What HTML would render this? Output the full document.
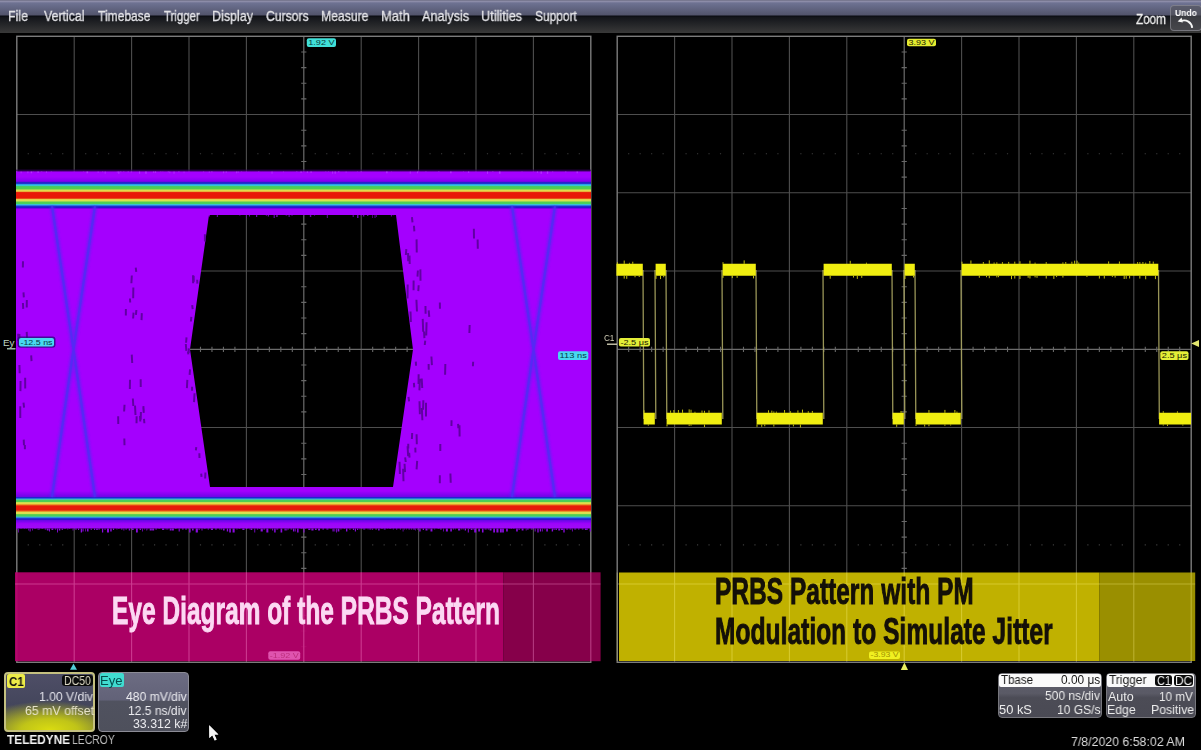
<!DOCTYPE html>
<html><head><meta charset="utf-8">
<style>
html,body{margin:0;padding:0;background:#000;}
body{width:1201px;height:750px;position:relative;overflow:hidden;font-family:"Liberation Sans",sans-serif;}
#menu{position:absolute;left:0;top:0;width:1201px;height:33px;
background:linear-gradient(to bottom,#6e6e84 0px,#8c8ca8 1.5px,#6e7292 3px,#52546c 15px,#0a0c12 16px,#14161b 17.5px,#383838 32.5px);}
#undo{position:absolute;left:1169.8px;top:4.6px;width:32px;height:26.8px;box-sizing:border-box;border:1.6px solid rgba(150,150,158,0.6);border-radius:4px;background:rgba(84,84,90,0.62);}
.box{position:absolute;box-sizing:border-box;border-radius:4px;}
#c1box{left:4px;top:672px;width:91px;height:59.5px;border:2px solid #c4c080;
background:radial-gradient(ellipse 85% 52% at 50% 100%,#dadc10 0%,#c0c418 38%,rgba(110,112,80,0.0) 100%),linear-gradient(to bottom,#4e4e66 0%,#44465c 55%,#5a5c48 100%);}
#eyebox{left:98.2px;top:672px;width:90.4px;height:59.5px;border:1.5px solid #8c8c96;
background:linear-gradient(to bottom,#6c6c82 0%,#626278 46%,#50525f 49%,#4e505c 100%);}
#tbox{left:998px;top:672.5px;width:103.5px;height:45px;border:1.5px solid #76767c;
background:linear-gradient(to bottom,#5c5c68 0%,#5a5a66 45%,#4c4c56 55%,#4a4a54 100%);}
#trbox{left:1105.6px;top:672.5px;width:90px;height:45px;border:1.5px solid #76767c;
background:linear-gradient(to bottom,#5c5c68 0%,#5a5a66 45%,#4c4c56 55%,#4a4a54 100%);}
.hdr{position:absolute;background:#fafafa;border-radius:2px;}
.blk{position:absolute;background:#0a0a0a;border-radius:3px;}
.tg{position:absolute;border-radius:2px;}
.t{position:absolute;white-space:pre;transform-origin:0 0;will-change:transform;}
</style></head><body>
<svg width="1201" height="750" style="position:absolute;left:0;top:0" font-family="Liberation Sans">
<style>
.g{stroke:#4e4e4e;stroke-width:1.1;fill:none}
.gc{stroke:#6c6c6c;stroke-width:1.2;fill:none}
.gt{stroke:#686868;stroke-width:1.1}
.gd{stroke:#3c3c3c;stroke-width:1.1}
.gb{stroke:#7c7c7c;stroke-width:1.4;fill:none}
</style>

<defs>
<filter id="bl1" x="-20%" y="-5%" width="140%" height="110%"><feGaussianBlur stdDeviation="1.2"/></filter>
<linearGradient id="pv" x1="0" y1="171" x2="0" y2="527" gradientUnits="userSpaceOnUse">
<stop offset="0" stop-color="#a400fe"/>
<stop offset="0.025" stop-color="#a400fe"/>
<stop offset="0.028" stop-color="#a400fe"/>
<stop offset="0.9" stop-color="#a400fe"/>
<stop offset="0.955" stop-color="#8204f2"/>
<stop offset="1" stop-color="#a008f8"/>
</linearGradient>
<linearGradient id="bt" x1="0" y1="177" x2="0" y2="209.5" gradientUnits="userSpaceOnUse">
<stop offset="0.0000" stop-color="#a400fe"/>
<stop offset="0.1323" stop-color="#8400f0"/>
<stop offset="0.1631" stop-color="#2a20c8"/>
<stop offset="0.2092" stop-color="#1e3ad0"/>
<stop offset="0.2338" stop-color="#2ab0e8"/>
<stop offset="0.2646" stop-color="#38c8d0"/>
<stop offset="0.2954" stop-color="#48cc58"/>
<stop offset="0.3692" stop-color="#50d050"/>
<stop offset="0.4000" stop-color="#dce050"/>
<stop offset="0.4400" stop-color="#e8d048"/>
<stop offset="0.4615" stop-color="#e86018"/>
<stop offset="0.4800" stop-color="#e81808"/>
<stop offset="0.6462" stop-color="#e81808"/>
<stop offset="0.6708" stop-color="#e87020"/>
<stop offset="0.6954" stop-color="#e0e050"/>
<stop offset="0.7385" stop-color="#d8e050"/>
<stop offset="0.7692" stop-color="#50d050"/>
<stop offset="0.8246" stop-color="#48d060"/>
<stop offset="0.8492" stop-color="#38c0e0"/>
<stop offset="0.8800" stop-color="#2a70e0"/>
<stop offset="0.8985" stop-color="#1e30d0"/>
<stop offset="0.9477" stop-color="#2a10d0"/>
<stop offset="0.9723" stop-color="#8000f0"/>
<stop offset="1.0000" stop-color="#a400fe"/>
</linearGradient>
<linearGradient id="bb" x1="0" y1="491" x2="0" y2="524" gradientUnits="userSpaceOnUse">
<stop offset="0.0000" stop-color="#a400fe"/>
<stop offset="0.1667" stop-color="#7006e8"/>
<stop offset="0.1909" stop-color="#2020c8"/>
<stop offset="0.2182" stop-color="#2040d8"/>
<stop offset="0.2424" stop-color="#38c0e0"/>
<stop offset="0.2788" stop-color="#48cc60"/>
<stop offset="0.3273" stop-color="#50d050"/>
<stop offset="0.3515" stop-color="#d8e050"/>
<stop offset="0.3879" stop-color="#e8d848"/>
<stop offset="0.4182" stop-color="#ea8020"/>
<stop offset="0.4545" stop-color="#e81a0a"/>
<stop offset="0.5758" stop-color="#e81a0a"/>
<stop offset="0.6121" stop-color="#ea8020"/>
<stop offset="0.6485" stop-color="#e0e050"/>
<stop offset="0.6909" stop-color="#d8e050"/>
<stop offset="0.7152" stop-color="#50d050"/>
<stop offset="0.7636" stop-color="#48cc60"/>
<stop offset="0.7879" stop-color="#38c0e0"/>
<stop offset="0.8242" stop-color="#2040d8"/>
<stop offset="0.8606" stop-color="#2020c8"/>
<stop offset="0.8939" stop-color="#6a08e8"/>
<stop offset="1.0000" stop-color="#a400fe"/>
</linearGradient>
</defs>
<path d="M74.2 36.3V662.3M131.6 36.3V662.3M189 36.3V662.3M246.4 36.3V662.3M361.2 36.3V662.3M418.6 36.3V662.3M476 36.3V662.3M533.4 36.3V662.3M16.8 114.55H590.8M16.8 192.8H590.8M16.8 271.05H590.8M16.8 427.55H590.8M16.8 505.8H590.8M16.8 584.05H590.8" class="g"/>
<path d="M303.8 36.3V662.3M16.8 349.3H590.8" class="gc"/>
<path d="M301.2 51.95h5.2M301.2 67.6h5.2M301.2 83.25h5.2M301.2 98.9h5.2M301.2 130.2h5.2M301.2 145.85h5.2M301.2 161.5h5.2M301.2 177.15h5.2M301.2 208.45h5.2M301.2 224.1h5.2M301.2 239.75h5.2M301.2 255.4h5.2M301.2 286.7h5.2M301.2 302.35h5.2M301.2 318h5.2M301.2 333.65h5.2M301.2 364.95h5.2M301.2 380.6h5.2M301.2 396.25h5.2M301.2 411.9h5.2M301.2 443.2h5.2M301.2 458.85h5.2M301.2 474.5h5.2M301.2 490.15h5.2M301.2 521.45h5.2M301.2 537.1h5.2M301.2 552.75h5.2M301.2 568.4h5.2M301.2 599.7h5.2M301.2 615.35h5.2M301.2 631h5.2M301.2 646.65h5.2M28.28 346.7v5.2M39.76 346.7v5.2M51.24 346.7v5.2M62.72 346.7v5.2M85.68 346.7v5.2M97.16 346.7v5.2M108.64 346.7v5.2M120.12 346.7v5.2M143.08 346.7v5.2M154.56 346.7v5.2M166.04 346.7v5.2M177.52 346.7v5.2M200.48 346.7v5.2M211.96 346.7v5.2M223.44 346.7v5.2M234.92 346.7v5.2M257.88 346.7v5.2M269.36 346.7v5.2M280.84 346.7v5.2M292.32 346.7v5.2M315.28 346.7v5.2M326.76 346.7v5.2M338.24 346.7v5.2M349.72 346.7v5.2M372.68 346.7v5.2M384.16 346.7v5.2M395.64 346.7v5.2M407.12 346.7v5.2M430.08 346.7v5.2M441.56 346.7v5.2M453.04 346.7v5.2M464.52 346.7v5.2M487.48 346.7v5.2M498.96 346.7v5.2M510.44 346.7v5.2M521.92 346.7v5.2M544.88 346.7v5.2M556.36 346.7v5.2M567.84 346.7v5.2M579.32 346.7v5.2" class="gt"/>
<path d="M27.68 153.68h1.2M39.16 153.68h1.2M50.64 153.68h1.2M62.12 153.68h1.2M85.08 153.68h1.2M96.56 153.68h1.2M108.04 153.68h1.2M119.52 153.68h1.2M142.48 153.68h1.2M153.96 153.68h1.2M165.44 153.68h1.2M176.92 153.68h1.2M199.88 153.68h1.2M211.36 153.68h1.2M222.84 153.68h1.2M234.32 153.68h1.2M257.28 153.68h1.2M268.76 153.68h1.2M280.24 153.68h1.2M291.72 153.68h1.2M314.68 153.68h1.2M326.16 153.68h1.2M337.64 153.68h1.2M349.12 153.68h1.2M372.08 153.68h1.2M383.56 153.68h1.2M395.04 153.68h1.2M406.52 153.68h1.2M429.48 153.68h1.2M440.96 153.68h1.2M452.44 153.68h1.2M463.92 153.68h1.2M486.88 153.68h1.2M498.36 153.68h1.2M509.84 153.68h1.2M521.32 153.68h1.2M544.28 153.68h1.2M555.76 153.68h1.2M567.24 153.68h1.2M578.72 153.68h1.2M27.68 544.92h1.2M39.16 544.92h1.2M50.64 544.92h1.2M62.12 544.92h1.2M85.08 544.92h1.2M96.56 544.92h1.2M108.04 544.92h1.2M119.52 544.92h1.2M142.48 544.92h1.2M153.96 544.92h1.2M165.44 544.92h1.2M176.92 544.92h1.2M199.88 544.92h1.2M211.36 544.92h1.2M222.84 544.92h1.2M234.32 544.92h1.2M257.28 544.92h1.2M268.76 544.92h1.2M280.24 544.92h1.2M291.72 544.92h1.2M314.68 544.92h1.2M326.16 544.92h1.2M337.64 544.92h1.2M349.12 544.92h1.2M372.08 544.92h1.2M383.56 544.92h1.2M395.04 544.92h1.2M406.52 544.92h1.2M429.48 544.92h1.2M440.96 544.92h1.2M452.44 544.92h1.2M463.92 544.92h1.2M486.88 544.92h1.2M498.36 544.92h1.2M509.84 544.92h1.2M521.32 544.92h1.2M544.28 544.92h1.2M555.76 544.92h1.2M567.24 544.92h1.2M578.72 544.92h1.2" class="gd"/>
<rect x="16.8" y="36.3" width="574" height="626" class="gb"/>
<path d="M674.6 36.3V662.3M732 36.3V662.3M789.4 36.3V662.3M846.8 36.3V662.3M961.6 36.3V662.3M1019 36.3V662.3M1076.4 36.3V662.3M1133.8 36.3V662.3M617.2 114.55H1191.2M617.2 192.8H1191.2M617.2 271.05H1191.2M617.2 427.55H1191.2M617.2 505.8H1191.2M617.2 584.05H1191.2" class="g"/>
<path d="M904.2 36.3V662.3M617.2 349.3H1191.2" class="gc"/>
<path d="M901.6 51.95h5.2M901.6 67.6h5.2M901.6 83.25h5.2M901.6 98.9h5.2M901.6 130.2h5.2M901.6 145.85h5.2M901.6 161.5h5.2M901.6 177.15h5.2M901.6 208.45h5.2M901.6 224.1h5.2M901.6 239.75h5.2M901.6 255.4h5.2M901.6 286.7h5.2M901.6 302.35h5.2M901.6 318h5.2M901.6 333.65h5.2M901.6 364.95h5.2M901.6 380.6h5.2M901.6 396.25h5.2M901.6 411.9h5.2M901.6 443.2h5.2M901.6 458.85h5.2M901.6 474.5h5.2M901.6 490.15h5.2M901.6 521.45h5.2M901.6 537.1h5.2M901.6 552.75h5.2M901.6 568.4h5.2M901.6 599.7h5.2M901.6 615.35h5.2M901.6 631h5.2M901.6 646.65h5.2M628.68 346.7v5.2M640.16 346.7v5.2M651.64 346.7v5.2M663.12 346.7v5.2M686.08 346.7v5.2M697.56 346.7v5.2M709.04 346.7v5.2M720.52 346.7v5.2M743.48 346.7v5.2M754.96 346.7v5.2M766.44 346.7v5.2M777.92 346.7v5.2M800.88 346.7v5.2M812.36 346.7v5.2M823.84 346.7v5.2M835.32 346.7v5.2M858.28 346.7v5.2M869.76 346.7v5.2M881.24 346.7v5.2M892.72 346.7v5.2M915.68 346.7v5.2M927.16 346.7v5.2M938.64 346.7v5.2M950.12 346.7v5.2M973.08 346.7v5.2M984.56 346.7v5.2M996.04 346.7v5.2M1007.52 346.7v5.2M1030.48 346.7v5.2M1041.96 346.7v5.2M1053.44 346.7v5.2M1064.92 346.7v5.2M1087.88 346.7v5.2M1099.36 346.7v5.2M1110.84 346.7v5.2M1122.32 346.7v5.2M1145.28 346.7v5.2M1156.76 346.7v5.2M1168.24 346.7v5.2M1179.72 346.7v5.2" class="gt"/>
<path d="M628.08 153.68h1.2M639.56 153.68h1.2M651.04 153.68h1.2M662.52 153.68h1.2M685.48 153.68h1.2M696.96 153.68h1.2M708.44 153.68h1.2M719.92 153.68h1.2M742.88 153.68h1.2M754.36 153.68h1.2M765.84 153.68h1.2M777.32 153.68h1.2M800.28 153.68h1.2M811.76 153.68h1.2M823.24 153.68h1.2M834.72 153.68h1.2M857.68 153.68h1.2M869.16 153.68h1.2M880.64 153.68h1.2M892.12 153.68h1.2M915.08 153.68h1.2M926.56 153.68h1.2M938.04 153.68h1.2M949.52 153.68h1.2M972.48 153.68h1.2M983.96 153.68h1.2M995.44 153.68h1.2M1006.92 153.68h1.2M1029.88 153.68h1.2M1041.36 153.68h1.2M1052.84 153.68h1.2M1064.32 153.68h1.2M1087.28 153.68h1.2M1098.76 153.68h1.2M1110.24 153.68h1.2M1121.72 153.68h1.2M1144.68 153.68h1.2M1156.16 153.68h1.2M1167.64 153.68h1.2M1179.12 153.68h1.2M628.08 544.92h1.2M639.56 544.92h1.2M651.04 544.92h1.2M662.52 544.92h1.2M685.48 544.92h1.2M696.96 544.92h1.2M708.44 544.92h1.2M719.92 544.92h1.2M742.88 544.92h1.2M754.36 544.92h1.2M765.84 544.92h1.2M777.32 544.92h1.2M800.28 544.92h1.2M811.76 544.92h1.2M823.24 544.92h1.2M834.72 544.92h1.2M857.68 544.92h1.2M869.16 544.92h1.2M880.64 544.92h1.2M892.12 544.92h1.2M915.08 544.92h1.2M926.56 544.92h1.2M938.04 544.92h1.2M949.52 544.92h1.2M972.48 544.92h1.2M983.96 544.92h1.2M995.44 544.92h1.2M1006.92 544.92h1.2M1029.88 544.92h1.2M1041.36 544.92h1.2M1052.84 544.92h1.2M1064.32 544.92h1.2M1087.28 544.92h1.2M1098.76 544.92h1.2M1110.24 544.92h1.2M1121.72 544.92h1.2M1144.68 544.92h1.2M1156.16 544.92h1.2M1167.64 544.92h1.2M1179.12 544.92h1.2" class="gd"/>
<rect x="617.2" y="36.3" width="574" height="626" class="gb"/>
<path d="M16 171.2H591V528.5H16Z M209 215L396 215L413 349.5L393 487L210 487L190 349.5Z" fill="url(#pv)" fill-rule="evenodd"/>
<path d="M16 528.5h1.12v1h-1.12ZM18.29 528.5h0.68v4h-0.68ZM20.44 528.5h1.19v0.5h-1.19ZM23.93 528.5h0.94v0.5h-0.94ZM26.13 528.5h0.71v0.5h-0.71ZM28.35 528.5h0.69v2h-0.69ZM29.62 528.5h0.96v3h-0.96ZM32.16 528.5h0.7v2h-0.7ZM34.03 528.5h2.16v0.5h-2.16ZM37.72 528.5h0.81v1.5h-0.81ZM39.15 528.5h0.79v1h-0.79ZM41.47 528.5h1.69v0.5h-1.69ZM44.74 528.5h1.62v1h-1.62ZM46.87 528.5h1.74v2h-1.74ZM49.05 528.5h0.93v3h-0.93ZM51.44 528.5h1.84v1.5h-1.84ZM54.88 528.5h1.33v1h-1.33ZM57.05 528.5h0.89v4h-0.89ZM58.77 528.5h1.52v2h-1.52ZM61.68 528.5h1.15v1.5h-1.15ZM63.76 528.5h2.17v0.5h-2.17ZM67.36 528.5h0.86v1h-0.86ZM68.86 528.5h1.38v0.5h-1.38ZM72.66 528.5h0.72v2h-0.72ZM74.94 528.5h2v1h-2ZM77.99 528.5h1.16v1.5h-1.16ZM80.73 528.5h1.33v4h-1.33ZM82.56 528.5h1.03v3h-1.03ZM85.35 528.5h0.7v3h-0.7ZM87.03 528.5h1.52v3h-1.52ZM90.67 528.5h1.06v1.5h-1.06ZM93.97 528.5h1.16v1.5h-1.16ZM96.21 528.5h1.58v1.5h-1.58ZM98.22 528.5h1.83v1h-1.83ZM101.97 528.5h1.24v4h-1.24ZM104.6 528.5h0.87v1.5h-0.87ZM106.97 528.5h2.01v4h-2.01ZM110.23 528.5h1.48v3h-1.48ZM112.93 528.5h1.17v1.5h-1.17ZM116.51 528.5h0.84v1h-0.84ZM117.98 528.5h1.65v0.5h-1.65ZM121 528.5h1.54v1h-1.54ZM123.47 528.5h0.83v2h-0.83ZM125.41 528.5h1.51v1h-1.51ZM128.74 528.5h1.42v2h-1.42ZM131.9 528.5h1.78v1.5h-1.78ZM135.97 528.5h1.85v4h-1.85ZM139.61 528.5h1.49v1.5h-1.49ZM142.28 528.5h0.77v3h-0.77ZM144.23 528.5h0.9v1h-0.9ZM146.41 528.5h0.78v2h-0.78ZM147.6 528.5h0.6v1h-0.6ZM149.68 528.5h2.12v2h-2.12ZM152.15 528.5h2v2h-2ZM155.28 528.5h1.62v1h-1.62ZM158.52 528.5h1.36v0.5h-1.36ZM162.05 528.5h2.19v1.5h-2.19ZM165.59 528.5h1.1v1h-1.1ZM167.22 528.5h1.15v1h-1.15ZM169.72 528.5h1.71v2h-1.71ZM171.77 528.5h2.12v2h-2.12ZM174.99 528.5h1.7v0.5h-1.7ZM178.66 528.5h1.08v3h-1.08ZM181.94 528.5h1.71v1h-1.71ZM185.09 528.5h2.05v1h-2.05ZM189.15 528.5h1.45v4h-1.45ZM192 528.5h1.62v2h-1.62ZM195.71 528.5h2.18v4h-2.18ZM198.61 528.5h0.98v1.5h-0.98ZM201.52 528.5h0.96v2h-0.96ZM203.87 528.5h1.77v0.5h-1.77ZM207.68 528.5h1.36v1h-1.36ZM210.86 528.5h2.13v1.5h-2.13ZM215.07 528.5h1.76v1h-1.76ZM219.22 528.5h1.18v1h-1.18ZM220.93 528.5h1.35v1h-1.35ZM223.03 528.5h1.6v2h-1.6ZM226.78 528.5h1.37v3h-1.37ZM229.21 528.5h1.63v4h-1.63ZM232.59 528.5h2.06v4h-2.06ZM236.51 528.5h0.92v1h-0.92ZM238.68 528.5h1.62v0.5h-1.62ZM242.36 528.5h2.15v1.5h-2.15ZM245.84 528.5h1.79v0.5h-1.79ZM249.52 528.5h0.87v1h-0.87ZM250.75 528.5h1.55v1.5h-1.55ZM254.37 528.5h0.83v4h-0.83ZM256.82 528.5h1.36v1h-1.36ZM258.82 528.5h1.48v0.5h-1.48ZM260.63 528.5h2.15v3h-2.15ZM263.31 528.5h1.8v1h-1.8ZM266.36 528.5h1.99v4h-1.99ZM270.58 528.5h0.64v1h-0.64ZM272.17 528.5h0.98v2h-0.98ZM274.17 528.5h1.47v4h-1.47ZM276.23 528.5h2.06v1h-2.06ZM280.56 528.5h1.66v4h-1.66ZM284.51 528.5h1.27v2h-1.27ZM286.37 528.5h0.84v2h-0.84ZM287.55 528.5h1.3v1h-1.3ZM290.5 528.5h1.84v1h-1.84ZM293.02 528.5h1.36v3h-1.36ZM294.94 528.5h0.7v3h-0.7ZM297.08 528.5h1.49v4h-1.49ZM300.58 528.5h2.01v0.5h-2.01ZM303.44 528.5h1.04v4h-1.04ZM304.99 528.5h1.32v0.5h-1.32ZM308.29 528.5h2.06v1.5h-2.06ZM311.37 528.5h2.16v2h-2.16ZM314.95 528.5h1.71v1.5h-1.71ZM318.08 528.5h1.89v2h-1.89ZM322.34 528.5h1.72v1h-1.72ZM326.39 528.5h2.03v1h-2.03ZM330.56 528.5h0.82v0.5h-0.82ZM332.55 528.5h1.11v3h-1.11ZM334.48 528.5h0.72v3h-0.72ZM336.17 528.5h0.8v4h-0.8ZM337.6 528.5h1.75v3h-1.75ZM340.45 528.5h1v1h-1ZM343.89 528.5h0.95v0.5h-0.95ZM346.01 528.5h1.38v3h-1.38ZM349.52 528.5h0.86v1.5h-0.86ZM352.87 528.5h1.25v1.5h-1.25ZM354.85 528.5h1.11v3h-1.11ZM357.06 528.5h1.14v1.5h-1.14ZM359.47 528.5h0.63v1h-0.63ZM361.54 528.5h1.07v0.5h-1.07ZM363.16 528.5h2.07v1h-2.07ZM367.67 528.5h0.77v1h-0.77ZM369.33 528.5h2.05v1h-2.05ZM372.28 528.5h0.81v1.5h-0.81ZM375.25 528.5h1.68v1h-1.68ZM378.13 528.5h1.46v2h-1.46ZM381.14 528.5h1.72v0.5h-1.72ZM383.78 528.5h1.88v1h-1.88ZM386.89 528.5h0.72v0.5h-0.72ZM389.3 528.5h1.88v0.5h-1.88ZM392.82 528.5h0.96v1h-0.96ZM395.98 528.5h1.33v1h-1.33ZM399.79 528.5h1.27v1h-1.27ZM402.73 528.5h0.67v3h-0.67ZM404.22 528.5h0.78v1h-0.78ZM405.87 528.5h0.89v1h-0.89ZM408.44 528.5h1.45v1h-1.45ZM410.83 528.5h1.4v1h-1.4ZM413.13 528.5h1.89v1h-1.89ZM415.4 528.5h0.63v2h-0.63ZM417.54 528.5h0.9v1.5h-0.9ZM419.28 528.5h1.32v3h-1.32ZM422.7 528.5h1.29v1.5h-1.29ZM425.49 528.5h2.02v2h-2.02ZM428.49 528.5h0.94v1h-0.94ZM430.49 528.5h1.93v3h-1.93ZM434.32 528.5h0.82v1h-0.82ZM437.61 528.5h1.94v0.5h-1.94ZM440 528.5h1.79v1h-1.79ZM443.03 528.5h0.69v3h-0.69ZM445.87 528.5h1.99v3h-1.99ZM450.3 528.5h1.56v3h-1.56ZM452.8 528.5h1.34v1h-1.34ZM455.03 528.5h0.61v1h-0.61ZM458.05 528.5h2.16v2h-2.16ZM461.22 528.5h0.66v1h-0.66ZM462.66 528.5h0.89v1h-0.89ZM464.69 528.5h1.36v2h-1.36ZM467.79 528.5h1v4h-1ZM469.1 528.5h1.02v0.5h-1.02ZM470.74 528.5h1.54v1.5h-1.54ZM472.63 528.5h1.09v1h-1.09ZM474.2 528.5h2.13v4h-2.13ZM478.28 528.5h1.65v3h-1.65ZM481.96 528.5h1.55v4h-1.55ZM484.53 528.5h2.18v1h-2.18ZM487.63 528.5h1.59v1h-1.59ZM489.62 528.5h1.94v2h-1.94ZM493.24 528.5h1.77v4h-1.77ZM496.42 528.5h2.06v4h-2.06ZM499.89 528.5h1.94v4h-1.94ZM502.16 528.5h1.7v4h-1.7ZM506.12 528.5h1.69v3h-1.69ZM509.53 528.5h0.74v0.5h-0.74ZM510.86 528.5h1.18v0.5h-1.18ZM513.16 528.5h1.32v0.5h-1.32ZM516.17 528.5h1.6v3h-1.6ZM518.61 528.5h1.02v1.5h-1.02ZM521.68 528.5h1.8v2h-1.8ZM525.76 528.5h0.75v2h-0.75ZM526.95 528.5h1.78v1h-1.78ZM530.81 528.5h1.95v1h-1.95ZM534.67 528.5h0.93v3h-0.93ZM537.32 528.5h1.34v4h-1.34ZM539.8 528.5h1.37v3h-1.37ZM542.1 528.5h0.67v3h-0.67ZM544.49 528.5h0.72v1h-0.72ZM546.24 528.5h1.64v3h-1.64ZM548.85 528.5h1.51v0.5h-1.51ZM551.72 528.5h1.38v3h-1.38ZM553.62 528.5h0.95v1.5h-0.95ZM555.51 528.5h1.43v1.5h-1.43ZM558.26 528.5h1.83v2h-1.83ZM560.83 528.5h2.17v1.5h-2.17ZM563.33 528.5h1.33v4h-1.33ZM566.08 528.5h2.19v1h-2.19ZM569.42 528.5h2.07v1h-2.07ZM571.95 528.5h0.74v3h-0.74ZM574.15 528.5h2.12v1h-2.12ZM577.9 528.5h1.61v1h-1.61ZM581.76 528.5h1.73v1h-1.73ZM584.88 528.5h2v1.5h-2ZM587.24 528.5h0.61v1.5h-0.61ZM589.65 528.5h1.25v3h-1.25Z" fill="#8a0ae0"/>
<path d="M209 215h1.01v1.5h-1.01ZM216.81 215h1.05v2h-1.05ZM239.17 215h1.26v0.5h-1.26ZM246.14 215h0.66v3h-0.66ZM248.95 215h1.01v1.5h-1.01ZM255.98 215h1.27v2h-1.27ZM265.87 215h0.77v1h-0.77ZM267.75 215h1.27v1.5h-1.27ZM273.65 215h1.1v3h-1.1ZM276.19 215h1.5v2h-1.5ZM285.6 215h1.62v0.5h-1.62ZM288.59 215h1.08v2h-1.08ZM291.26 215h1.58v0.5h-1.58ZM303.14 215h0.9v0.5h-0.9ZM309.87 215h1.38v2h-1.38ZM314.46 215h0.6v1h-0.6ZM326.83 215h0.91v3h-0.91ZM352.68 215h1.03v2h-1.03ZM357 215h1.49v3h-1.49ZM360.72 215h0.84v1h-0.84ZM362.84 215h1.51v1.5h-1.51ZM367.04 215h1.33v1h-1.33ZM372.05 215h0.67v3h-0.67ZM374.6 215h0.86v3h-0.86ZM376.14 215h0.67v2h-0.67ZM390.86 215h1.05v1.5h-1.05ZM392.79 215h0.69v0.5h-0.69Z" fill="#6a08b0"/>
<path d="M16 171.2h0.72v1h-0.72ZM20.68 171.2h0.91v2h-0.91ZM27.43 171.2h0.96v2h-0.96ZM30.74 171.2h1.41v2h-1.41ZM32.81 171.2h0.66v0.5h-0.66ZM37.34 171.2h1.5v1.5h-1.5ZM40.84 171.2h1.55v0.5h-1.55ZM46.12 171.2h0.92v1.5h-0.92ZM50.78 171.2h1.2v0.5h-1.2ZM83.26 171.2h0.86v0.5h-0.86ZM86.52 171.2h1.59v2h-1.59ZM97.67 171.2h0.88v1.5h-0.88ZM102.37 171.2h0.8v1h-0.8ZM104.72 171.2h0.88v2.5h-0.88ZM116.85 171.2h0.64v1.5h-0.64ZM118.22 171.2h1.2v2.5h-1.2ZM120.25 171.2h1.11v1h-1.11ZM123.04 171.2h1.38v0.5h-1.38ZM127.6 171.2h1.22v1h-1.22ZM130.85 171.2h0.64v1.5h-0.64ZM139.14 171.2h0.97v2.5h-0.97ZM145.26 171.2h1.4v2.5h-1.4ZM153.16 171.2h0.88v1.5h-0.88ZM154.77 171.2h1.35v1.5h-1.35ZM160.32 171.2h1v0.5h-1ZM162.53 171.2h0.71v0.5h-0.71ZM167.72 171.2h1.06v1h-1.06ZM169.51 171.2h0.74v2h-0.74ZM173.55 171.2h0.97v2.5h-0.97ZM178.34 171.2h1.09v1h-1.09ZM183.7 171.2h0.64v2h-0.64ZM203.34 171.2h0.78v1h-0.78ZM208.84 171.2h0.76v1.5h-0.76ZM211.21 171.2h1.32v1h-1.32ZM223.2 171.2h0.91v2h-0.91ZM225.72 171.2h0.99v1.5h-0.99ZM236.01 171.2h0.78v2h-0.78ZM237.59 171.2h0.96v1.5h-0.96ZM241.04 171.2h1.11v0.5h-1.11ZM258.02 171.2h1.33v0.5h-1.33ZM271.56 171.2h0.92v2.5h-0.92ZM283.19 171.2h0.64v1h-0.64ZM296 171.2h1.48v0.5h-1.48ZM300.39 171.2h1.46v1.5h-1.46ZM306.81 171.2h1.18v1.5h-1.18ZM310.4 171.2h1.42v1.5h-1.42ZM325.26 171.2h1.11v0.5h-1.11ZM327.9 171.2h1.25v0.5h-1.25ZM332.2 171.2h0.9v2.5h-0.9ZM334.62 171.2h1.18v2.5h-1.18ZM337.95 171.2h1.43v1h-1.43ZM345.72 171.2h0.74v1.5h-0.74ZM356.92 171.2h0.85v0.5h-0.85ZM360.66 171.2h1.01v1h-1.01ZM386.11 171.2h1.44v2h-1.44ZM391.01 171.2h0.78v0.5h-0.78ZM409.8 171.2h0.82v2.5h-0.82ZM416.98 171.2h0.93v2h-0.93ZM425.27 171.2h1.3v0.5h-1.3ZM437.95 171.2h1.58v0.5h-1.58ZM450.13 171.2h1.47v2h-1.47ZM463.03 171.2h0.89v0.5h-0.89ZM467.98 171.2h1.25v1.5h-1.25ZM487.01 171.2h1.04v2.5h-1.04ZM491.97 171.2h1.58v0.5h-1.58ZM498.94 171.2h1.56v2.5h-1.56ZM521.52 171.2h1.02v0.5h-1.02ZM536.91 171.2h1.15v1.5h-1.15ZM540.54 171.2h1.37v2.5h-1.37ZM546.86 171.2h1.35v2.5h-1.35ZM552.33 171.2h0.84v1h-0.84ZM565.3 171.2h1.03v1h-1.03ZM576.58 171.2h1.23v2h-1.23Z" fill="#c070ff" opacity="0.45"/>
<rect x="16" y="169.6" width="575" height="1.6" fill="#3a0068" opacity="0.7"/>
<rect x="16" y="177" width="575" height="32.5" fill="url(#bt)"/>
<rect x="16" y="491" width="575" height="33" fill="url(#bb)"/>
<path d="M52 206L73.5 349.5L52 497M95 206L73.5 349.5L95 497" stroke="#3c34f0" stroke-width="5" fill="none" opacity="0.5" filter="url(#bl1)"/>
<path d="M52 206L73.5 349.5L52 497M95 206L73.5 349.5L95 497" stroke="#4a30f2" stroke-width="2.2" fill="none" opacity="0.7"/>
<path d="M512 206L533.5 349.5L512 497M555 206L533.5 349.5L555 497" stroke="#3c34f0" stroke-width="5" fill="none" opacity="0.5" filter="url(#bl1)"/>
<path d="M512 206L533.5 349.5L512 497M555 206L533.5 349.5L555 497" stroke="#4a30f2" stroke-width="2.2" fill="none" opacity="0.7"/>
<path d="M26.98 340.78l0.15 6.5M19.37 333.92l0.26 10.26M26.81 300.01l-0.05 7.39M26.7 331.87l0.52 9.4M20.56 380.9l-0.13 10.23M24.86 444.92l0.05 4.31M20.25 406.36l0.02 11.52M19.42 364.91l0.26 8.33M25.17 377.85l0.03 10.63M23.74 439.59l0.22 5.68M23.49 402.54l0.58 4.98M22.98 261.32l-0.12 6.19M18.19 333.72l0.24 7.36M22.93 303.03l0.29 5.8M31.16 355.42l0.36 5.75M23.49 292.4l0.33 5.03M140.67 379.17l0.07 7.75M124.33 438.5l0.17 6.83M140.92 411.91l-0.25 7.74M133.35 287.53l-0.17 10.67M141.82 313.14l-0.3 7.01M129.93 298.46l0.27 4.02M125.87 309.09l-0.02 6.41M130 379.71l-0.17 9.27M144 418.8l0.39 4.46M143.36 406.13l0.4 5.12M135.73 267.7l0.54 4.09M136.37 310l-0.43 4.81M124.54 404.74l-0.42 6.77M143.31 407.5l0.47 5.34M135.03 405.63l0.47 9.35M140.07 415.98l0.23 5.58M132.86 398.54l0.46 7.51M133.54 312.61l-0.43 5.87M131.81 275.52l-0.43 7.74M131.76 354.67l0.44 8.32M118.18 416.34l0.08 7.74M136.63 416.3l-0.1 7M477.64 239.6l0.16 9.1M421.71 378.52l0.52 9.46M439.83 475.25l-0.02 8.09M473.85 228.81l0.15 9.75M440.32 444.04l-0.03 6.93M451.53 420.35l-0.08 5.69M445.34 364.05l-0.25 10.61M469.66 324.97l-0.27 8.03M450.39 473.5l0.35 9.24M439.85 302.44l0.1 6.39M458.09 423.9l0.27 4.32M473.14 361.8l-0.24 4.4M420.37 269.38l0.13 11.37M459.48 425.15l0.13 11.28M416.59 434.3l0.22 9.96M419.91 378.72l-0.48 11.63M416.57 239.38l0.19 13.14M423.35 400.22l-0.29 9.62M409.5 255.62l0.17 8.31M425.23 340.6l-0.46 4.39M417.17 460.92l-0.58 8.46M426.01 402.73l-0.03 13.81M417.9 270.47l-0.42 6.12M411.94 217.09l0.56 5.22M415.82 361.62l0.26 4.18M413.9 382.81l0.33 4.5M415.32 447.61l0.15 4.84M428.7 310.39l0.56 6.54M410.49 311.46l0.38 10.51M413.94 225.72l0.43 5.66M413.62 280.41l-0.07 9.75M425.45 306.04l0.17 7.63M416.42 299.7l0.53 11.86M405.16 457.39l0.57 4.61M407.58 446.2l0.57 10.06M404.55 463.8l0.47 8.29M419.5 401.29l0.37 12.96M408.08 253.11l0.1 8.23M399.53 461.7l0.37 12.33M403.13 468.74l0.37 12.51M408.24 443.64l0.06 4.85M426.56 322.25l-0.32 13.32M412.17 432.95l-0.29 6.07M409.17 452.78l0.37 4.88M422.72 318.86l0.46 12.97M418.66 285.19l-0.37 5.89M418.64 374.35l-0.12 9.64M407.68 284.57l-0.15 13.97M428.62 364.09l0.12 5.56M408.51 396.93l0.59 4.34M424.07 331.49l0.34 6.62M421.83 408.07l0.56 12.19M406.34 249.16l-0.5 5.81M431.39 356.51l0.54 8.58M186.53 337.38l-0.46 5.38M185.82 344.03l0.55 6.84M192.14 305.08l0.56 3.96M188.89 348.39l-0.18 4.54M201.19 473.63l0.34 3.28M196.29 447.07l-0.43 3.33M199.36 453.31l0.11 4.79M191.33 316.94l-0.45 4.54M197.19 279.74l0.21 3.86M187.89 351.23l0.51 3.22M187.34 379.83l-0.43 8.33M193 275.15l0.15 8.05M193.64 275.84l0.15 5.87M204.89 234.2l0.06 7.28M190.03 369.4l-0.41 5.47M192.08 386.78l-0.01 4.01M194.56 393.23l-0.53 8.87M205.42 472.57l-0.26 5.86" stroke="#50008c" stroke-width="2" opacity="0.8"/>
<path d="M643 270L643.8 419M655 270L655.8 419M666 270L666.8 419M722 270L722.8 419M756 270L756.8 419M823 270L823.8 419M892 270L892.8 419M904 270L904.8 419M915 270L915.8 419M961 270L961.8 419M1158.5 270L1159.3 419" stroke="#a8a460" stroke-width="1.3" fill="none" opacity="0.9"/>
<path d="M616.4 263.8H642.8V275.8H616.4ZM643.6 412.8H654.8V424.5H643.6ZM655.6 263.8H665.8V275.8H655.6ZM666.6 412.8H721.8V424.5H666.6ZM722.6 263.8H755.8V275.8H722.6ZM756.6 412.8H822.8V424.5H756.6ZM823.6 263.8H891.8V275.8H823.6ZM892.6 412.8H903.8V424.5H892.6ZM904.6 263.8H914.8V275.8H904.6ZM915.6 412.8H960.8V424.5H915.6ZM961.6 263.8H1158.3V275.8H961.6ZM1159.1 412.8H1191V424.5H1159.1Z" fill="#f0ee10"/>
<path d="M617.4 263.8v-1.5M624.21 263.8v-3.24M624.21 275.8v2.82M626.74 275.8v3.02M629.43 263.8v-1M632.77 263.8v-2.09M635.04 275.8v1.45M639.23 275.8v1.2M644 412.8v-2.53M648.34 424.5v1.16M656 275.8v3.1M660.53 275.8v3.28M663.69 275.8v1.47M667 424.5v1.93M670.58 412.8v-2.3M673.89 412.8v-2.79M678.42 412.8v-2.78M682.55 412.8v-3.18M689.16 412.8v-3.42M689.16 424.5v1.46M691.02 412.8v-3.04M691.02 424.5v1.24M694.96 412.8v-1.04M702 412.8v-2.23M704.48 412.8v-2.01M704.48 424.5v2.48M708.99 412.8v-2.43M723 263.8v-1.6M723 275.8v2.09M732.29 275.8v2.29M737.14 275.8v2.06M744.17 263.8v-3.42M753.54 275.8v2.6M757 424.5v2.36M761.74 424.5v2.3M764.75 424.5v1.76M768.52 412.8v-2.49M771.82 412.8v-2.17M773.84 412.8v-1.33M773.84 424.5v2.02M776.35 412.8v-1.22M784.56 412.8v-2.78M790.57 412.8v-1.55M793.41 424.5v1.88M797.92 412.8v-2.39M800.42 424.5v2.93M802.48 412.8v-3.18M808.27 412.8v-1.56M812.35 412.8v-1.84M830.19 275.8v2.91M850.25 263.8v-2.97M853.5 275.8v1.76M857.32 275.8v3.11M861.75 275.8v2.07M866.44 263.8v-1.12M896.69 424.5v2.33M901.04 412.8v-1.8M905 275.8v3.24M913.52 275.8v1.72M916 424.5v1.46M924.68 424.5v2.03M928.94 412.8v-2.73M928.94 424.5v1.76M944.92 412.8v-2.9M944.92 424.5v1.25M950.66 424.5v1.03M954.86 412.8v-2.79M956.95 412.8v-1.25M962 263.8v-2.12M970.92 263.8v-3.33M979.32 275.8v1.97M983.34 263.8v-1.77M986.53 275.8v1.43M989.29 263.8v-3.43M989.29 275.8v2.4M994.1 263.8v-1.31M996.83 263.8v-1.48M996.83 275.8v1.59M998.45 275.8v1.39M1002.42 263.8v-1.67M1008.69 263.8v-1.88M1011.51 275.8v3.38M1014.77 263.8v-2.13M1014.77 275.8v2.77M1019.97 263.8v-2.52M1019.97 275.8v3.18M1028.15 275.8v1.97M1029.95 263.8v-3.13M1029.95 275.8v2.66M1035.08 263.8v-1.16M1035.08 275.8v1.57M1037.03 275.8v2.01M1046.22 263.8v-1.69M1046.22 275.8v2.7M1053.85 275.8v3.12M1056.58 275.8v1.29M1062.92 263.8v-1.41M1062.92 275.8v1.76M1065.75 263.8v-1.78M1071.89 263.8v-2.09M1074.61 263.8v-3.09M1077.11 263.8v-3.14M1078.78 263.8v-1.28M1086.93 275.8v1.22M1099.36 275.8v2.75M1104.31 275.8v2.76M1108.63 263.8v-2.37M1112.36 275.8v1.15M1115.11 275.8v1.78M1119.42 263.8v-2.29M1124.2 275.8v3.21M1126.2 275.8v3.04M1129.61 275.8v2.67M1137.62 263.8v-1.72M1139.84 263.8v-1.7M1139.84 275.8v2.75M1142.91 263.8v-1.81M1145.68 263.8v-1.18M1145.68 275.8v3.48M1149.81 263.8v-2.79M1153.28 263.8v-2.22M1155.44 275.8v3.3M1163.28 412.8v-1.61M1163.28 424.5v1.07M1167.49 424.5v1.46M1177.42 412.8v-1.46M1182.83 424.5v1.1" stroke="#d8d410" stroke-width="0.9"/>
<rect x="15" y="572.3" width="488.2" height="88.9" fill="#b8006c" opacity="0.93"/>
<rect x="503.2" y="572.3" width="97.4" height="88.9" fill="#900050" opacity="0.93"/>
<rect x="619" y="572.5" width="480.2" height="88.5" fill="#ccbc00" opacity="0.94"/>
<rect x="1099.2" y="572.5" width="96" height="88.5" fill="#a49800" opacity="0.94"/>
<path d="M74.2 572.3V661.2M131.6 572.3V661.2M189 572.3V661.2M246.4 572.3V661.2M303.8 572.3V661.2M361.2 572.3V661.2M418.6 572.3V661.2M476 572.3V661.2M533.4 572.3V661.2M590.8 572.3V661.2M15 584.05H600.6" stroke="#ff9ad8" stroke-width="1.1" opacity="0.35" fill="none"/>
<path d="M617.2 572.5V661M674.6 572.5V661M732 572.5V661M789.4 572.5V661M846.8 572.5V661M904.2 572.5V661M961.6 572.5V661M1019 572.5V661M1076.4 572.5V661M1133.8 572.5V661M1191.2 572.5V661M619 584.05H1195.2" stroke="#fff890" stroke-width="1.1" opacity="0.3" fill="none"/>
<rect x="306.8" y="38.3" width="29.2" height="8.7" rx="2" fill="#40e0d8" opacity="1"/>
<text x="321.4" y="45.4" font-size="7.5" fill="#0a3838" text-anchor="middle" textLength="26.2" lengthAdjust="spacingAndGlyphs" opacity="1">1.92 V</text>
<rect x="907" y="38.7" width="29" height="7.6" rx="2" fill="#e4ec30" opacity="1"/>
<text x="921.5" y="44.7" font-size="7.5" fill="#202000" text-anchor="middle" textLength="26" lengthAdjust="spacingAndGlyphs" opacity="1">3.93 V</text>
<rect x="17.5" y="336.6" width="38" height="11.2" rx="3" fill="#2a0a80" opacity="0.8"/>
<rect x="19" y="338" width="35" height="8.6" rx="2" fill="#48d8f0" opacity="1"/>
<text x="36.5" y="345" font-size="7.5" fill="#083848" text-anchor="middle" textLength="32" lengthAdjust="spacingAndGlyphs" opacity="1">-12.5 ns</text>
<rect x="558" y="351.3" width="30.3" height="8.7" rx="2" fill="#48d8f0" opacity="1"/>
<text x="573.15" y="358.4" font-size="7.5" fill="#083848" text-anchor="middle" textLength="27.3" lengthAdjust="spacingAndGlyphs" opacity="1">113 ns</text>
<rect x="618.9" y="338.1" width="31.1" height="8.5" rx="2" fill="#e4ee38" opacity="1"/>
<text x="634.45" y="345" font-size="7.5" fill="#202000" text-anchor="middle" textLength="28.1" lengthAdjust="spacingAndGlyphs" opacity="1">-2.5 μs</text>
<rect x="1160.3" y="351.3" width="28.2" height="8.6" rx="2" fill="#e4ee38" opacity="1"/>
<text x="1174.4" y="358.3" font-size="7.5" fill="#202000" text-anchor="middle" textLength="25.2" lengthAdjust="spacingAndGlyphs" opacity="1">2.5 μs</text>
<rect x="268.3" y="651.2" width="31.9" height="8.5" rx="2" fill="#f070c8" opacity="0.75"/>
<text x="284.25" y="658.1" font-size="7.5" fill="#b0206a" text-anchor="middle" textLength="28.9" lengthAdjust="spacingAndGlyphs" opacity="0.75">-1.92 V</text>
<rect x="869" y="651.5" width="31" height="7.5" rx="2" fill="#f0f020" opacity="1"/>
<text x="884.5" y="657.4" font-size="7.5" fill="#a09000" text-anchor="middle" textLength="28" lengthAdjust="spacingAndGlyphs" opacity="1">-3.93 V</text>
<path d="M70 669.8L77 669.8L73.5 663.6Z" fill="#50d0d8"/>
<path d="M900.8 670L908 670L904.4 662.6Z" fill="#e8ec60"/>
<path d="M1191.2 343.4L1199 339.9L1199 347Z" fill="#e4e870"/>
<path d="M7 348.8H15.5" stroke="#b8d8c0" stroke-width="1.3"/>
<path d="M607 344.2H617" stroke="#e0dcc0" stroke-width="1.3"/>
<text x="3" y="345.8" font-size="8.5" fill="#c0d8c4" textLength="11.5" lengthAdjust="spacingAndGlyphs">Ey</text>
<path d="M209.2 725.2L209.4 738L212.3 735.2L214.8 740.6L216.6 739.6L214.3 734.6L218.4 734.4Z" fill="#f4f4f4"/>
</svg>
<div id="menu"></div>
<div id="undo"></div>
<div class="box" id="c1box"></div>
<div class="box" id="eyebox"></div>
<div class="box" id="tbox"></div>
<div class="box" id="trbox"></div>
<div class="tg" style="left:7px;top:674.3px;width:18.2px;height:13.6px;background:#ecec48"></div>
<div class="blk" style="left:62px;top:674.8px;width:31px;height:11.7px"></div>
<div class="tg" style="left:99.7px;top:673.4px;width:24.3px;height:13.6px;background:#40dcd0"></div>
<div class="hdr" style="left:999.2px;top:674px;width:101.5px;height:12.6px"></div>
<div class="hdr" style="left:1107px;top:673.8px;width:87px;height:12.8px"></div>
<div class="blk" style="left:1155px;top:675px;width:16.8px;height:10.5px"></div>
<div class="blk" style="left:1174px;top:675px;width:19px;height:10.5px"></div>
<svg width="40" height="40" style="position:absolute;left:1160px;top:0"><path d="M21.2 20.9A8.2 8.2 0 0 1 32.2 27.8" stroke="#f4f4f4" stroke-width="1.9" fill="none"/><path d="M17.6 21.4L21.6 17.4L22.8 22.6Z" fill="#f4f4f4"/></svg>
<svg width="30" height="30" style="position:absolute;left:200px;top:718px"><path d="M9.2 7.2L9.4 20L12.3 17.2L14.8 22.6L16.6 21.6L14.3 16.6L18.4 16.4Z" fill="#f4f4f4"/></svg>
<div class="t" style="left:7.86px;top:9.58px;font-size:13.91px;line-height:13.91px;color:#e4e4e8;font-weight:normal;transform:scaleX(0.8929);-webkit-text-stroke:0.3px #e4e4e8;">File</div><div class="t" style="left:44.00px;top:9.58px;font-size:13.91px;line-height:13.91px;color:#e4e4e8;font-weight:normal;transform:scaleX(0.8889);-webkit-text-stroke:0.3px #e4e4e8;">Vertical</div><div class="t" style="left:98.00px;top:9.58px;font-size:13.91px;line-height:13.91px;color:#e4e4e8;font-weight:normal;transform:scaleX(0.8667);-webkit-text-stroke:0.3px #e4e4e8;">Timebase</div><div class="t" style="left:163.50px;top:9.58px;font-size:13.91px;line-height:13.91px;color:#e4e4e8;font-weight:normal;transform:scaleX(0.8182);-webkit-text-stroke:0.3px #e4e4e8;">Trigger</div><div class="t" style="left:212.10px;top:9.58px;font-size:13.91px;line-height:13.91px;color:#e4e4e8;font-weight:normal;transform:scaleX(0.8978);-webkit-text-stroke:0.3px #e4e4e8;">Display</div><div class="t" style="left:266.12px;top:9.58px;font-size:13.91px;line-height:13.91px;color:#e4e4e8;font-weight:normal;transform:scaleX(0.8766);-webkit-text-stroke:0.3px #e4e4e8;">Cursors</div><div class="t" style="left:320.82px;top:9.58px;font-size:13.91px;line-height:13.91px;color:#e4e4e8;font-weight:normal;transform:scaleX(0.8774);-webkit-text-stroke:0.3px #e4e4e8;">Measure</div><div class="t" style="left:380.77px;top:9.58px;font-size:13.91px;line-height:13.91px;color:#e4e4e8;font-weight:normal;transform:scaleX(0.9310);-webkit-text-stroke:0.3px #e4e4e8;">Math</div><div class="t" style="left:422.20px;top:9.58px;font-size:13.91px;line-height:13.91px;color:#e4e4e8;font-weight:normal;transform:scaleX(0.9118);-webkit-text-stroke:0.3px #e4e4e8;">Analysis</div><div class="t" style="left:481.38px;top:9.58px;font-size:13.91px;line-height:13.91px;color:#e4e4e8;font-weight:normal;transform:scaleX(0.9163);-webkit-text-stroke:0.3px #e4e4e8;">Utilities</div><div class="t" style="left:535.14px;top:9.58px;font-size:13.91px;line-height:13.91px;color:#e4e4e8;font-weight:normal;transform:scaleX(0.8583);-webkit-text-stroke:0.3px #e4e4e8;">Support</div><div class="t" style="left:1136.00px;top:12.50px;font-size:13.77px;line-height:13.77px;color:#eeeeee;font-weight:normal;transform:scaleX(0.8486);-webkit-text-stroke:0.3px #eeeeee;">Zoom</div><div class="t" style="left:1174.50px;top:8.84px;font-size:9.13px;line-height:9.13px;color:#ffffff;font-weight:bold;transform:scaleX(0.9348);">Undo</div><div class="t" style="left:111.94px;top:592.09px;font-size:38.84px;line-height:38.84px;color:#fcd9f3;font-weight:bold;transform:scaleX(0.6308);-webkit-text-stroke:0.9px #fcd9f3;">Eye Diagram of the PRBS Pattern</div><div class="t" style="left:715.40px;top:573.44px;font-size:37.83px;line-height:37.83px;color:#141008;font-weight:bold;transform:scaleX(0.6481);-webkit-text-stroke:0.9px #141008;">PRBS Pattern with PM</div><div class="t" style="left:715.38px;top:612.74px;font-size:37.25px;line-height:37.25px;color:#141008;font-weight:bold;transform:scaleX(0.6605);-webkit-text-stroke:0.9px #141008;">Modulation to Simulate Jitter</div><div class="t" style="left:8.60px;top:675.42px;font-size:13.04px;line-height:13.04px;color:#101010;font-weight:bold;transform:scaleX(0.8824);">C1</div><div class="t" style="left:63.63px;top:674.86px;font-size:12.17px;line-height:12.17px;color:#dcd8c4;font-weight:normal;transform:scaleX(0.8667);">DC50</div><div class="t" style="left:39.35px;top:691.06px;font-size:12.75px;line-height:12.75px;color:#e2e2ea;font-weight:normal;transform:scaleX(0.9518);">1.00 V/div</div><div class="t" style="left:24.93px;top:705.06px;font-size:12.75px;line-height:12.75px;color:#e6e2c8;font-weight:normal;transform:scaleX(0.9671);">65 mV offset</div><div class="t" style="left:100.29px;top:675.23px;font-size:12.9px;line-height:12.9px;color:#044c4c;font-weight:normal;transform:scaleX(1.0143);">Eye</div><div class="t" style="left:125.90px;top:690.63px;font-size:12.32px;line-height:12.32px;color:#ececf0;font-weight:normal;transform:scaleX(0.9855);">480 mV/div</div><div class="t" style="left:128.22px;top:704.63px;font-size:12.32px;line-height:12.32px;color:#ececf0;font-weight:normal;transform:scaleX(0.9797);">12.5 ns/div</div><div class="t" style="left:132.80px;top:718.23px;font-size:12.32px;line-height:12.32px;color:#ececf0;font-weight:normal;transform:scaleX(1.0038);">33.312 k#</div><div class="t" style="left:1001.00px;top:674.50px;font-size:11.88px;line-height:11.88px;color:#181818;font-weight:normal;transform:scaleX(0.9697);">Tbase</div><div class="t" style="left:1060.50px;top:674.50px;font-size:11.88px;line-height:11.88px;color:#181818;font-weight:normal;transform:scaleX(1.0000);">0.00 μs</div><div class="t" style="left:1044.58px;top:689.42px;font-size:13.04px;line-height:13.04px;color:#ececec;font-weight:normal;transform:scaleX(0.9237);">500 ns/div</div><div class="t" style="left:999.00px;top:703.93px;font-size:12.9px;line-height:12.9px;color:#ececec;font-weight:normal;transform:scaleX(1.0000);">50 kS</div><div class="t" style="left:1057.07px;top:703.93px;font-size:12.9px;line-height:12.9px;color:#ececec;font-weight:normal;transform:scaleX(0.9333);">10 GS/s</div><div class="t" style="left:1108.70px;top:674.06px;font-size:12.75px;line-height:12.75px;color:#181818;font-weight:normal;transform:scaleX(0.9375);">Trigger</div><div class="t" style="left:1157.00px;top:674.76px;font-size:12.17px;line-height:12.17px;color:#f0f0f0;font-weight:normal;transform:scaleX(0.9000);">C1</div><div class="t" style="left:1175.03px;top:674.76px;font-size:12.17px;line-height:12.17px;color:#f0f0f0;font-weight:normal;transform:scaleX(0.9688);">DC</div><div class="t" style="left:1108.20px;top:690.56px;font-size:12.17px;line-height:12.17px;color:#ececec;font-weight:normal;transform:scaleX(1.0320);">Auto</div><div class="t" style="left:1159.34px;top:690.56px;font-size:12.17px;line-height:12.17px;color:#ececec;font-weight:normal;transform:scaleX(0.9618);">10 mV</div><div class="t" style="left:1107.03px;top:703.66px;font-size:12.75px;line-height:12.75px;color:#ececec;font-weight:normal;transform:scaleX(0.9655);">Edge</div><div class="t" style="left:1150.53px;top:703.66px;font-size:12.75px;line-height:12.75px;color:#ececec;font-weight:normal;transform:scaleX(0.9651);">Positive</div><div class="t" style="left:1071.07px;top:734.57px;font-size:13.33px;line-height:13.33px;color:#dcdcdc;font-weight:normal;transform:scaleX(0.9256);">7/8/2020 6:58:02 AM</div><div class="t" style="left:6.50px;top:733.32px;font-size:13.62px;line-height:13.62px;color:#f4f4f4;font-weight:bold;transform:scaleX(0.8681);">TELEDYNE</div><div class="t" style="left:72.24px;top:733.32px;font-size:13.62px;line-height:13.62px;color:#bdbdbd;font-weight:normal;transform:scaleX(0.7636);">LECROY</div><div class="t" style="left:604.30px;top:334.09px;font-size:8.84px;line-height:8.84px;color:#d8d4bc;font-weight:normal;transform:scaleX(0.9000);">C1</div>
</body></html>
